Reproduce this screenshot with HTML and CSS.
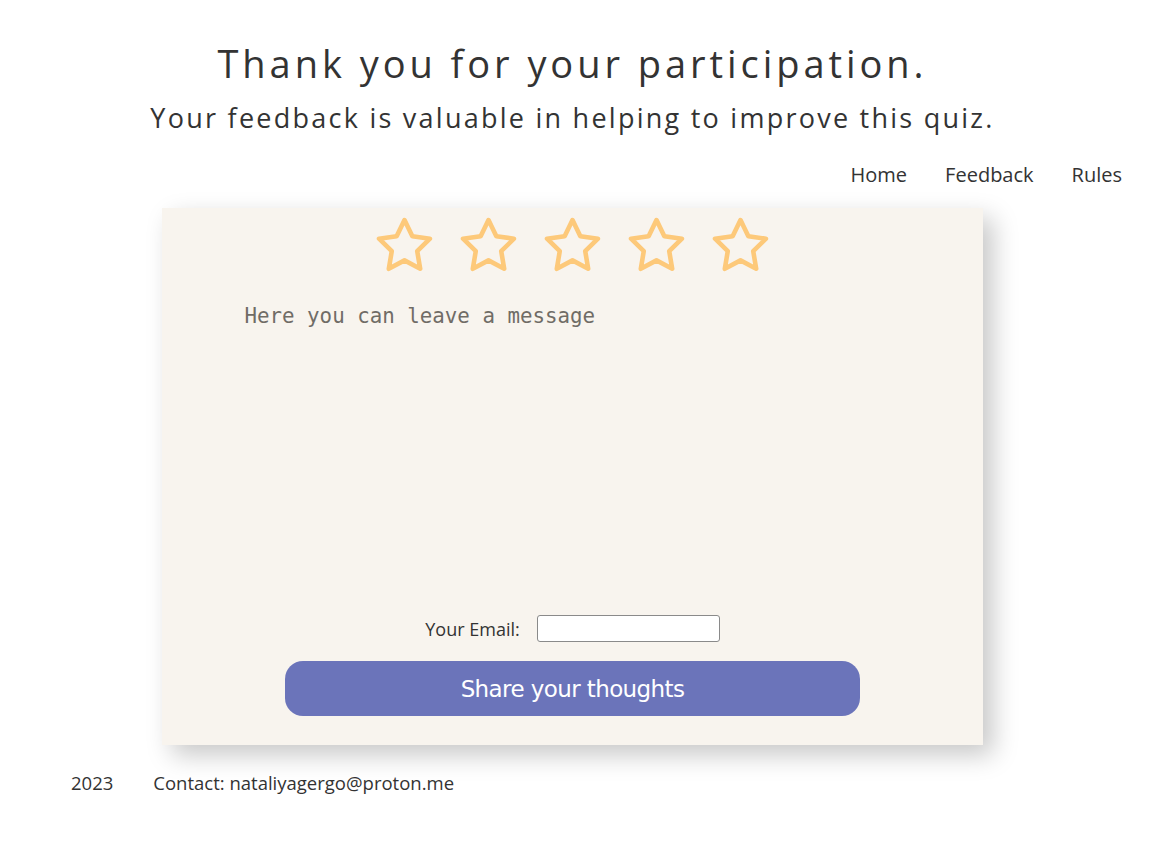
FILE: index.html
```html
<!DOCTYPE html>
<html lang="en">
<head>
<meta charset="utf-8">
<title>Feedback</title>
<link rel="stylesheet" href="styles.css">
</head>
<body>
<header class="header">
  <h1 class="title">Thank you for your participation.</h1>
  <h2 class="subtitle">Your feedback is valuable in helping to improve this quiz.</h2>
</header>
<nav class="nav">
  <a class="nav-link" href="#">Home</a>
  <a class="nav-link" href="#">Feedback</a>
  <a class="nav-link" href="#">Rules</a>
</nav>
<main class="main">
  <form class="card">
    <div class="stars">
      <svg class="star" viewBox="0 0 24 24"><path d="M12 2.6l2.9 6 6.5.9-4.7 4.6 1.1 6.5L12 17.5l-5.8 3.1 1.1-6.5-4.7-4.6 6.5-.9z"/></svg>
      <svg class="star" viewBox="0 0 24 24"><path d="M12 2.6l2.9 6 6.5.9-4.7 4.6 1.1 6.5L12 17.5l-5.8 3.1 1.1-6.5-4.7-4.6 6.5-.9z"/></svg>
      <svg class="star" viewBox="0 0 24 24"><path d="M12 2.6l2.9 6 6.5.9-4.7 4.6 1.1 6.5L12 17.5l-5.8 3.1 1.1-6.5-4.7-4.6 6.5-.9z"/></svg>
      <svg class="star" viewBox="0 0 24 24"><path d="M12 2.6l2.9 6 6.5.9-4.7 4.6 1.1 6.5L12 17.5l-5.8 3.1 1.1-6.5-4.7-4.6 6.5-.9z"/></svg>
      <svg class="star" viewBox="0 0 24 24"><path d="M12 2.6l2.9 6 6.5.9-4.7 4.6 1.1 6.5L12 17.5l-5.8 3.1 1.1-6.5-4.7-4.6 6.5-.9z"/></svg>
    </div>
    <textarea class="message" placeholder="Here you can leave a message"></textarea>
    <div class="email-row">
      <label class="email-label" for="email">Your Email:</label>
      <input class="email-input" id="email" type="email">
    </div>
    <button class="submit" type="button">Share your thoughts</button>
  </form>
</main>
<footer class="footer">
  <span class="year">2023</span>
  <span class="contact">Contact: nataliyagergo@proton.me</span>
</footer>
</body>
</html>
```
FILE: styles.css
```css
* { box-sizing: border-box; }
body {
  margin: 0;
  background: #fff;
  color: #333;
  font-family: "Open Sans", "Noto Sans", sans-serif;
}
.header {
  width: 1145px;
  text-align: center;
  padding-top: 38px;
}
.title {
  margin: 0;
  font-size: 38px;
  font-weight: 400;
  letter-spacing: 3.95px;
  line-height: 50px;
}
.subtitle {
  margin: 13px 0 0;
  font-size: 27px;
  font-weight: 400;
  letter-spacing: 2.25px;
  line-height: 34px;
}
.nav {
  display: flex;
  justify-content: flex-end;
  gap: 38px;
  padding: 27px 31px 0 0;
  height: 73px;
}
.nav-link {
  color: #333;
  text-decoration: none;
  font-size: 20px;
  line-height: 26px;
}
.main {
  padding-left: 162px;
}
.card {
  width: 821px;
  height: 537px;
  background: #f8f4ee;
  box-shadow: 10px 10px 24px rgba(0,0,0,0.22);
  display: flex;
  flex-direction: column;
  align-items: center;
  padding-top: 5px;
}
.stars {
  display: flex;
  gap: 19px;
}
.star {
  width: 65px;
  height: 65px;
  fill: none;
  stroke: #fdc97a;
  stroke-width: 1.7;
  stroke-linejoin: round;
}
.message {
  width: 664px;
  height: 302px;
  margin-top: 25px;
  border: none;
  outline: none;
  background: transparent;
  resize: none;
  padding: 0 2px 0 4px;
  font-family: "DejaVu Sans Mono", monospace;
  font-size: 20.8px;
  line-height: 26px;
}
.message::placeholder { color: #706c66; }
.email-row {
  display: flex;
  align-items: center;
  gap: 17px;
  margin-top: 10px;
}
.email-label {
  font-size: 18px;
}
.email-input {
  width: 183px;
  height: 27px;
  border: 1px solid #8a8a8a;
  border-radius: 3px;
  background: #fff;
}
.submit {
  margin-top: 19px;
  width: 575px;
  height: 55px;
  border: none;
  border-radius: 18px;
  background: #6b74ba;
  color: #fff;
  font-family: "DejaVu Sans", sans-serif;
  font-size: 23px;
  letter-spacing: -0.6px;
}
.footer {
  display: flex;
  gap: 40px;
  padding: 25px 0 0 71px;
  font-size: 18.5px;
}
```
